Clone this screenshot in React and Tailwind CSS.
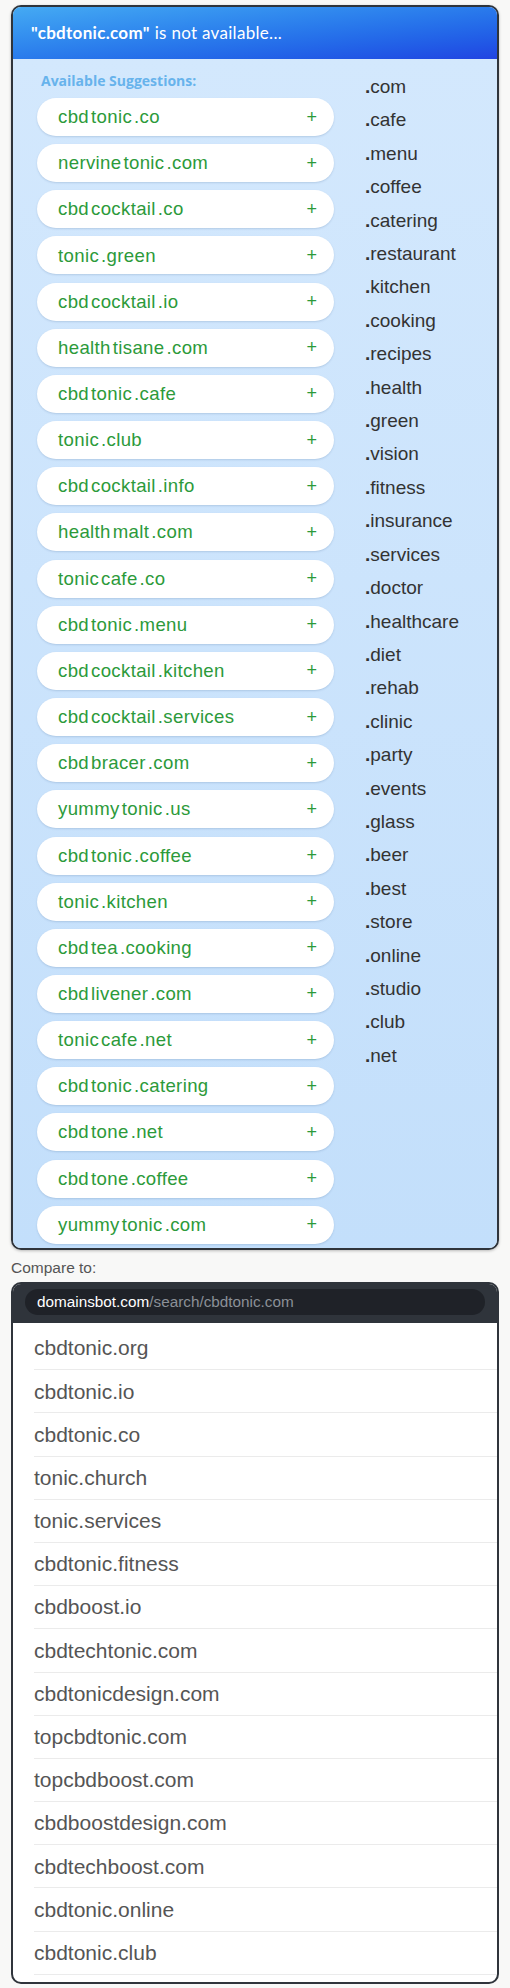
const suggestions = [
    ['cbd', 'tonic', '.co'],
    ['nervine', 'tonic', '.com'],
    ['cbd', 'cocktail', '.co'],
    ['tonic', '.green'],
    ['cbd', 'cocktail', '.io'],
    ['health', 'tisane', '.com'],
    ['cbd', 'tonic', '.cafe'],
    ['tonic', '.club'],
    ['cbd', 'cocktail', '.info'],
    ['health', 'malt', '.com'],
    ['tonic', 'cafe', '.co'],
    ['cbd', 'tonic', '.menu'],
    ['cbd', 'cocktail', '.kitchen'],
    ['cbd', 'cocktail', '.services'],
    ['cbd', 'bracer', '.com'],
    ['yummy', 'tonic', '.us'],
    ['cbd', 'tonic', '.coffee'],
    ['tonic', '.kitchen'],
    ['cbd', 'tea', '.cooking'],
    ['cbd', 'livener', '.com'],
    ['tonic', 'cafe', '.net'],
    ['cbd', 'tonic', '.catering'],
    ['cbd', 'tone', '.net'],
    ['cbd', 'tone', '.coffee'],
    ['yummy', 'tonic', '.com'],
];

const tlds = [
    'com', 'cafe', 'menu', 'coffee', 'catering', 'restaurant', 'kitchen', 'cooking', 'recipes', 'health',
    'green', 'vision', 'fitness', 'insurance', 'services', 'doctor', 'healthcare', 'diet', 'rehab', 'clinic',
    'party', 'events', 'glass', 'beer', 'best', 'store', 'online', 'studio', 'club', 'net',
];

const compare = [
    'cbdtonic.org', 'cbdtonic.io', 'cbdtonic.co', 'tonic.church', 'tonic.services', 'cbdtonic.fitness',
    'cbdboost.io', 'cbdtechtonic.com', 'cbdtonicdesign.com', 'topcbdtonic.com', 'topcbdboost.com',
    'cbdboostdesign.com', 'cbdtechboost.com', 'cbdtonic.online', 'cbdtonic.club',
];

function SuggestionPill({ parts }) {
    return (
        <div className="flex h-[38px] items-center justify-between rounded-full bg-white pl-[21px] pr-[17px] shadow-[0_1px_2px_rgba(40,80,130,0.18)]">
            <span className="flex gap-[2px] text-[18.6px] tracking-[0.35px] text-[#2c9a3a]">
                {parts.map((p, i) => (
                    <span key={i}>{p}</span>
                ))}
            </span>
            <span className="text-[18px] text-[#2c9a3a]">+</span>
        </div>
    );
}

export default function App() {
    return (
        <div className="min-h-[1988px] bg-[#f8f8f7] px-[11px] pt-[5px] font-['Liberation_Sans',Arial,sans-serif]">
            <div className="overflow-hidden rounded-[10px] border-2 border-[#2f343b] shadow-[0_1px_3px_rgba(0,0,0,0.25)]">
                <div className="flex h-[52px] items-center bg-gradient-to-br from-[#45aaf3] to-[#2143e2] pl-[18px] font-['Lato',sans-serif] text-[17px] tracking-[0.3px] text-white">
                    <span className="font-bold">"cbdtonic.com"</span>
                    <span className="ml-[5px]">is not available...</span>
                </div>
                <div className="flex h-[1189px] overflow-hidden bg-gradient-to-b from-[#d3e8fd] to-[#c3dffb]">
                    <div className="ml-[24px] w-[297px] shrink-0 pt-[12px]">
                        <div className="mb-[7px] pl-[4px] font-['Open_Sans',sans-serif] text-[14px] leading-[20px] font-bold text-[#67b3ec]">
                            Available Suggestions:
                        </div>
                        <div className="flex flex-col gap-[8.17px]">
                            {suggestions.map((s, i) => (
                                <SuggestionPill key={i} parts={s} />
                            ))}
                        </div>
                    </div>
                    <div className="ml-[31px] pt-[11px] text-[19px] leading-[33.4px] text-[#333]">
                        {tlds.map((t) => (
                            <div key={t}>
                                <span className="font-bold">.</span>
                                {t}
                            </div>
                        ))}
                    </div>
                </div>
            </div>

            <div className="mt-[8px] mb-[4px] text-[15.5px] leading-[20px] text-[#555]">Compare to:</div>

            <div className="overflow-hidden rounded-[10px] border-2 border-[#2f343b] bg-white">
                <div className="bg-[#2f343b] px-[12px] pt-[5px] pb-[8px]">
                    <div className="flex h-[26px] items-center rounded-full bg-[#1f2228] pl-[12px] text-[15.3px]">
                        <span className="text-white">domainsbot.com</span>
                        <span className="text-[#8b9097]">/search/cbdtonic.com</span>
                    </div>
                </div>
                <div className="pt-[4px] pb-[7px] pl-[21px]">
                    {compare.map((c) => (
                        <div key={c} className="flex h-[43.2px] items-center border-b border-[#ebebeb] text-[21px] text-[#555]">
                            {c}
                        </div>
                    ))}
                </div>
            </div>
        </div>
    );
}
